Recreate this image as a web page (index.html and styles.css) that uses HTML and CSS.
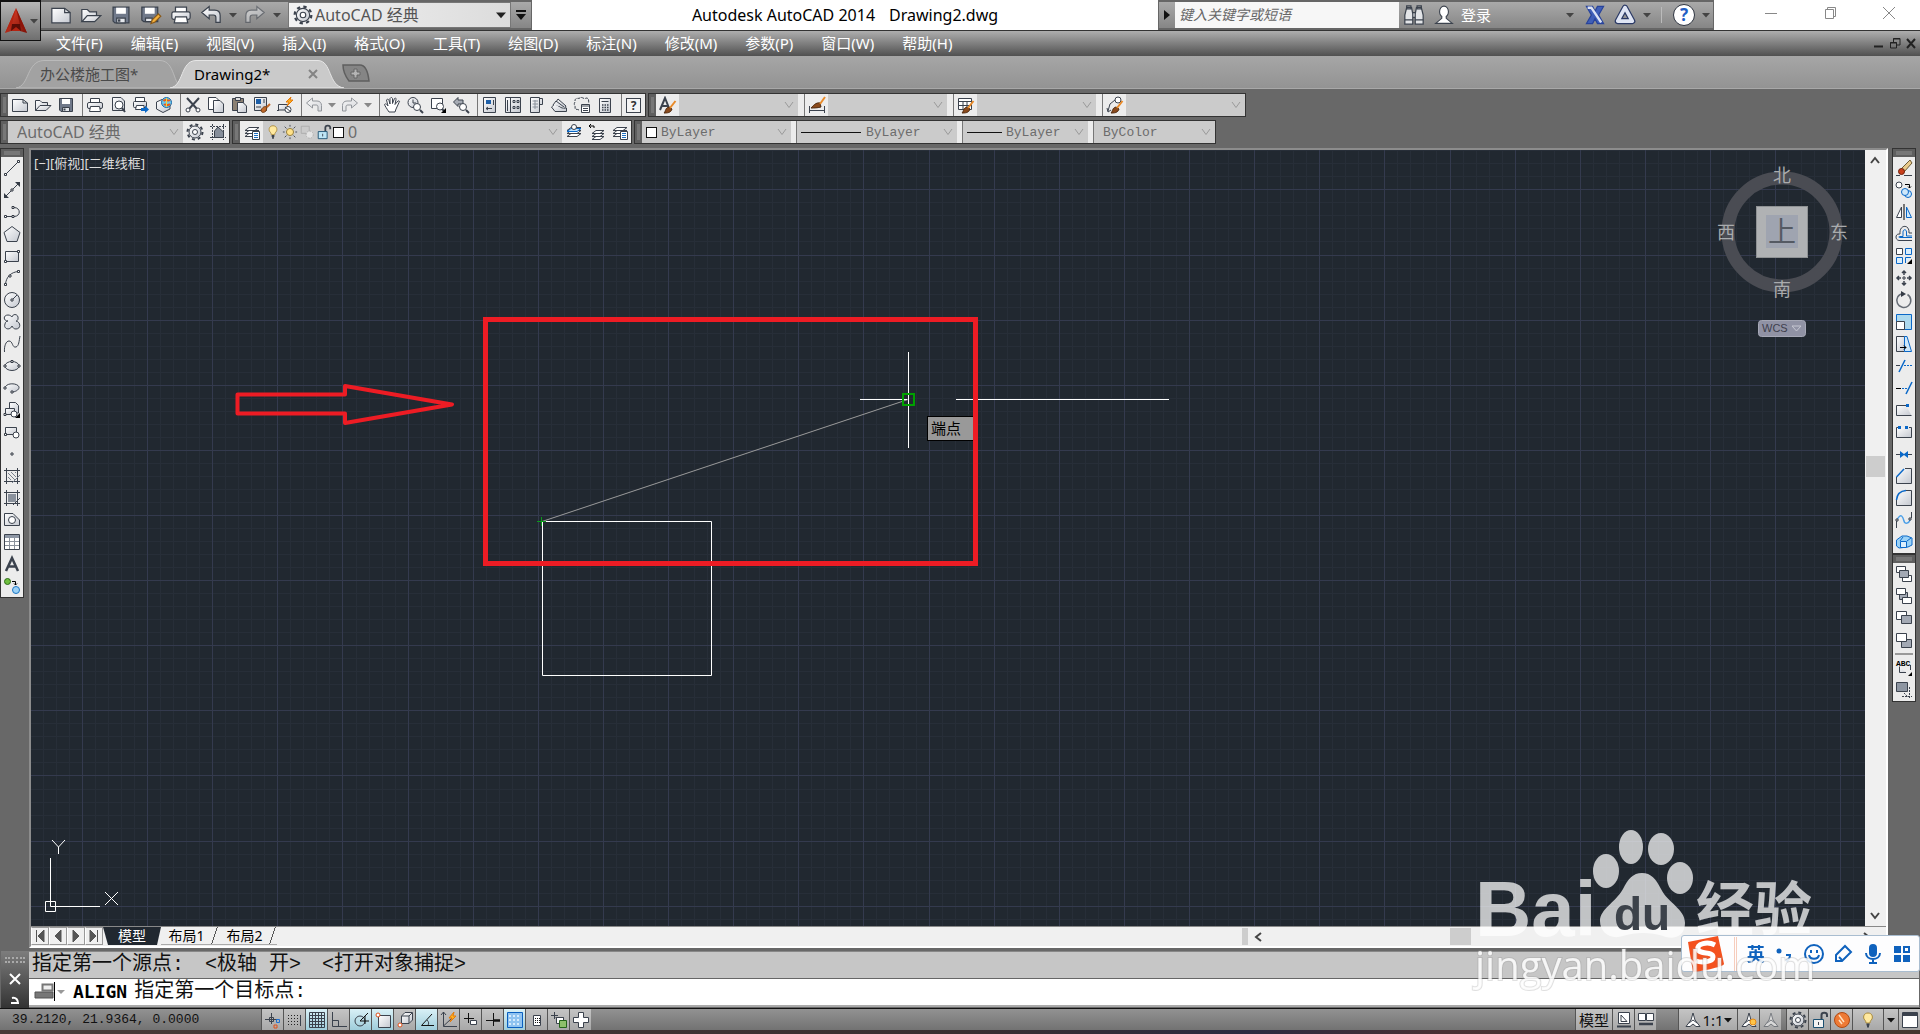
FILE: index.html
```html
<!DOCTYPE html>
<html lang="zh-CN">
<head>
<meta charset="utf-8">
<title>Autodesk AutoCAD 2014 Drawing2.dwg</title>
<link rel="stylesheet" href="styles.css">
</head>
<body>
<svg class="sprite" aria-hidden="true">
<defs>
<linearGradient id="g-face" x1="0" y1="0" x2="1" y2="1"><stop offset="0" stop-color="#fff"/><stop offset="1" stop-color="#c4c8d0"/></linearGradient>
<linearGradient id="g-red" x1="0" y1="0" x2="1" y2="1"><stop offset="0" stop-color="#e8452c"/><stop offset="1" stop-color="#7d1208"/></linearGradient>
</defs>
<symbol id="new" viewBox="0 0 18 18"><path class="face" d="M1.500 3.500H12L16.500 7V15.500H1.500Z"/><path d="M12 3.500V7H16.500"/></symbol>
<symbol id="open" viewBox="0 0 18 18"><path class="face" d="M1.500 14.500V4.500H6L8 6.500H13.500V9"/><path class="face" d="M1.500 14.500L6 9.500H17L12 14.500Z"/></symbol>
<symbol id="save" viewBox="0 0 18 18"><path d="M2.500 2.500H15.500V15.500H4L2.500 14Z" fill="#70798a"/><path d="M5 3H13V8H5Z" fill="#fff" stroke="none"/><path d="M5.500 11.500H12.500V15.500H5.500Z" fill="#e4e7ec"/><path d="M7.500 12.500V14.500" stroke-width="2"/></symbol>
<symbol id="saveas" viewBox="0 0 18 18"><path d="M1.500 2.500H14.500V14.500H3L1.500 13Z" fill="#70798a"/><path d="M4 3H12V8H4Z" fill="#fff" stroke="none"/><path d="M4.500 11.500H10V14.500H4.500Z" fill="#e4e7ec"/><path d="M9 16L10 13L15 8L17 10L12 15Z" fill="#f3b03c" stroke="#8a5a1a"/></symbol>
<symbol id="print" viewBox="0 0 18 18"><path class="white" d="M4.500 2.500H13.500V7H4.500Z"/><rect class="face" x="1.500" y="6.500" width="15" height="6" rx="1.500"/><path class="white" d="M4.500 10.500H13.500L14.500 15.500H3.500Z"/></symbol>
<symbol id="preview" viewBox="0 0 18 18"><path class="face" d="M3.500 1.500H12L15.500 5V14.500H3.500Z"/><circle class="white" cx="10" cy="9" r="4"/><path d="M13 12L16 16" stroke-width="2"/></symbol>
<symbol id="publish" viewBox="0 0 18 18"><path class="white" d="M3.500 1.500H12.500V6H3.500Z"/><rect class="face" x="1.500" y="5.500" width="13" height="6" rx="1"/><path class="white" d="M4.500 9.500H12V13.500H3.500Z"/><path class="blue-fill" d="M9 12H13V9.500L17 13.500L13 17V15H9Z"/></symbol>
<symbol id="globe3d" viewBox="0 0 18 18"><path class="face" d="M1.500 6L7 3.500L15 6V13L8 16.500L1.500 13Z"/><circle cx="11.500" cy="6.500" r="5" fill="#6ec6ea" stroke="#1b6aa8"/><path d="M8.500 5C11 2 12 6 15 4M9 9C11 7 12 11 15 8" stroke="#e85a1a" stroke-width="2"/><path d="M11.500 2V11" stroke="#f5d33a"/></symbol>
<symbol id="cut" viewBox="0 0 18 18"><path d="M3 2L13 13M15 2L5 13" stroke-width="2"/><circle class="white" cx="4" cy="14" r="2"/><circle class="white" cx="14" cy="14" r="2"/></symbol>
<symbol id="copy" viewBox="0 0 18 18"><path class="white" d="M1.500 1.500H9L11.500 4V13.500H1.500Z"/><path class="face" d="M6.500 4.500H13L16.500 8V16.500H6.500Z"/></symbol>
<symbol id="paste" viewBox="0 0 18 18"><path d="M2.500 2.500H13.500V14.500H2.500Z" fill="#8b8072"/><path d="M5.500 1.500H10.500V4.500H5.500Z" fill="#ddd"/><path class="face" d="M7.500 6.500H13L16.500 10V16.500H7.500Z"/></symbol>
<symbol id="match" viewBox="0 0 18 18"><path class="face" d="M1.500 1.500H13.500V14.500H1.500Z"/><path d="M3 3H8V8H3Z" fill="#1d5fa8" stroke="none"/><path d="M10 4H12M10 6H12M3 11H8"/><path d="M8 14C10 11 11 10 14 11L13 15C11 17 8 17 8 14Z" fill="#c1692a" stroke="#6b3a12"/><path d="M14 11L17 8" stroke="#c1692a" stroke-width="2"/></symbol>
<symbol id="block" viewBox="0 0 18 18"><path class="face" d="M2.500 8.500H11.500V14H2.500Z"/><circle cx="12" cy="13.500" r="3" class="white"/><path d="M1 14.500H3M9 11L15 16"/><path d="M15 1L10 6H13L11 10L17 4H14Z" fill="#ffb01f" stroke="#e37a0b"/></symbol>
<symbol id="undo" viewBox="0 0 18 18"><path class="face" d="M1.500 7L7.500 2V5H12C15 5 16.500 7 16.500 9.500V15H13V11C13 9.500 12.500 9 11 9H7.500V12Z"/></symbol>
<symbol id="redo" viewBox="0 0 18 18"><path class="face" d="M16.500 7L10.500 2V5H6C3 5 1.500 7 1.500 9.500V15H5V11C5 9.500 5.500 9 7 9H10.500V12Z"/></symbol>
<symbol id="pan" viewBox="0 0 18 18"><path class="white" d="M6 16C4 13 2 10 1.500 8.500C2.500 7 4 8.500 5 10L3.500 4C4.500 2.500 5.500 3 6 4.500L7 8L7 2.500C8 1 9 1.500 9.500 2.500V7.500L11.500 2.500C12.500 1.500 13.500 2.500 13 3.500L12 8.500L15 5C16.500 4.500 17 5.500 16 6.500L13 13L12 16Z"/></symbol>
<symbol id="zoomrt" viewBox="0 0 18 18"><circle class="face" cx="7" cy="6.500" r="5"/><path d="M7 3.500V7H10"/><circle class="white" cx="11" cy="11" r="3.500"/><path d="M14 14L17 17" stroke-width="2"/></symbol>
<symbol id="zoomwin" viewBox="0 0 18 18"><path class="white" d="M2.500 2.500H13.500V12.500H2.500Z"/><circle class="white" cx="11" cy="10.500" r="3.500"/><path d="M13 13L15 15" stroke-width="2"/><path d="M17 12V17H12Z" fill="#000" stroke="none"/></symbol>
<symbol id="zoomprev" viewBox="0 0 18 18"><path d="M1.500 6L6 1.500V4H11V8H6V10.500Z" fill="#a6abb4"/><circle class="white" cx="11" cy="11" r="3.500"/><path d="M14 14L17 17" stroke-width="2"/></symbol>
<symbol id="props" viewBox="0 0 18 18"><path class="face" d="M2.500 1.500H14.500V16.500H2.500Z"/><path d="M5 4H10V8H5Z" fill="#1d5fa8" stroke="none"/><path d="M12.500 4V9M5 12.500H11M7 11L5 12.500L7 14"/></symbol>
<symbol id="dcenter" viewBox="0 0 18 18"><path class="face" d="M1.500 1.500H16.500V16.500H1.500Z"/><path d="M3.500 4V15M6.500 2V16M9 4.500H11V6.500H9ZM13 4.500H15V6.500H13ZM9 10.500H11V12.500H9ZM13 10.500H15V12.500H13Z"/></symbol>
<symbol id="palette" viewBox="0 0 18 18"><path class="face" d="M3.500 1.500H12.500V16.500H3.500ZM12.500 2.500H15.500V8.500H12.500"/><path d="M5.500 5H11M5.500 8H11M5.500 11H11M8 4V13" stroke="#8a919c"/></symbol>
<symbol id="sheets" viewBox="0 0 18 18"><path class="face" d="M1.500 11L5 8L12 12H16.500V15.500H5Z"/><path class="face" d="M3 9L6 5L14 11M6 6L8 3L16 10L14.500 12.500"/></symbol>
<symbol id="markup" viewBox="0 0 18 18"><path d="M2 5C2 1 6 3 7 2C9 0 11 4 13 2C17 2 15 6 16 7M2 6C0 9 3 10 2 12C2 14 5 13 6 14" stroke-dasharray="3 1"/><path class="white" d="M8.500 8.500H16.500V16.500H8.500Z"/><path d="M8.500 10H16.500M10 12.500H15M10 14.500H15"/></symbol>
<symbol id="calc" viewBox="0 0 18 18"><path class="face" d="M3.500 2.500H14.500V16.500H3.500Z"/><path d="M5.500 5.500H12.500"/><path d="M6 9H12.500M6 11.500H12.500M6 14H12.500" stroke-dasharray="1.500 1" stroke-width="1.500"/></symbol>
<symbol id="layers" viewBox="0 0 18 18"><path class="white" d="M2 13.500L6 10.500H16L12 13.500ZM2 10.500L6 7.500H16L12 10.500ZM2 7.500L6 4.500H16L12 7.500Z"/></symbol>
<symbol id="layerp" viewBox="0 0 18 18"><use href="#layers"/><path class="white" d="M9.500 8.500H16.500V16.500H9.500Z"/><path d="M11 10.500H15M11 12.500H15M11 14.500H15" stroke="#1d6fc0"/></symbol>
<symbol id="layercur" viewBox="0 0 18 18"><use href="#layers"/><path d="M2 8.500L6 5.500H16L12 8.500Z" fill="#bfe0fa" stroke="#0a68c8"/><circle class="white" cx="9" cy="4" r="2.500"/></symbol>
<symbol id="layerprev" viewBox="0 0 18 18"><path class="white" d="M4 16.500L8 13.500H16L12 16.500ZM4 13.500L8 10.500H16L12 13.500ZM4 10.500L8 7.500H16L12 10.500Z"/><path d="M6 5V3H1M3 1L1 3L3 5" stroke="#000"/></symbol>
<symbol id="gear" viewBox="0 0 18 18"><circle cx="9" cy="9" r="7.500" stroke-width="2" stroke-dasharray="3 2.900"/><circle class="face" cx="9" cy="9" r="6"/><circle class="white" cx="9" cy="9" r="2.500"/></symbol>
<symbol id="wsset" viewBox="0 0 18 18"><path d="M1 3.500H17M1 14.500H17M3.500 1V17M14.500 1V17" stroke-dasharray="2 1"/><path d="M5.500 14.500V8L9 4L14.500 9V14.500Z" fill="#868e9a"/></symbol>
<symbol id="bulb" viewBox="0 0 18 18"><path d="M9 2C5 2 4 5.500 5 8C6 9.500 7 10 7 12H11C11 10 12 9.500 13 8C14 5.500 13 2 9 2Z" fill="#ffe9a0" stroke="#a98a3c"/><path d="M7.500 13.500H10.500M8 15.500H10" stroke-width="2"/></symbol>
<symbol id="sun" viewBox="0 0 18 18"><circle cx="9" cy="9" r="4" fill="#ffe28a" stroke="#8c7430"/><path d="M9 1V3M9 15V17M1 9H3M15 9H17M3 3L5 5M13 13L15 15M15 3L13 5M5 13L3 15"/></symbol>
<symbol id="vpfreeze" viewBox="0 0 18 18"><path d="M2.500 2.500H11.500V10.500H2.500Z" stroke="#aaa"/><circle cx="12" cy="12" r="4" fill="#e4e4e4" stroke="#aaa" stroke-dasharray="2 1"/></symbol>
<symbol id="unlock" viewBox="0 0 18 18"><path d="M10.500 8V4C10.500 1 16 1 16 4V6" stroke-width="2"/><path class="lockbody" d="M2.500 8.500H12.500V16.500H2.500Z"/><path d="M7.500 11V14"/></symbol>
<symbol id="brush" viewBox="0 0 18 18"><path d="M5 17C7 15 6 12 10 11L13 13C12 17 8 17 5 17Z" fill="#8a4a1c" stroke="#4e2a10"/><path d="M11 12L16.500 5" stroke="#e98a28" stroke-width="2"/></symbol>
<symbol id="textstyle" viewBox="0 0 18 18"><path d="M1 14L6 2L10 12M3 10H9" stroke-width="2"/><use href="#brush"/></symbol>
<symbol id="dimstyle" viewBox="0 0 18 18"><path d="M1.500 10V17M16.500 10V17M2 14.500H16"/><path d="M3 12C5 10 8 6 12 7L13 11C9 12 6 12 3 12Z" fill="#8a4a1c" stroke="#4e2a10"/><path d="M12 8L17 1" stroke="#e98a28" stroke-width="2"/></symbol>
<symbol id="tblstyle" viewBox="0 0 18 18"><path class="white" d="M1.500 2.500H14.500V13.500H1.500Z"/><path d="M1.500 5.500H14.500M1.500 9.500H14.500M6 5V13M10 5V13"/><use href="#brush"/></symbol>
<symbol id="mldstyle" viewBox="0 0 18 18"><circle class="white" cx="12" cy="4" r="3"/><path d="M2 15L4 8L9 4M1 12L2 16L5 14"/><use href="#brush"/></symbol>
<symbol id="line" viewBox="0 0 18 18"><path d="M3 15L15 3"/><path class="node" d="M1.500 14.500h2v2h-2zM14.500 1.500h2v2h-2z"/></symbol>
<symbol id="xline" viewBox="0 0 18 18"><path d="M2 16L16 2"/><path d="M1 17V12L6 17ZM17 1V6L12 1Z" fill="#343b45" stroke="none"/><path class="node" d="M8 8h2v2h-2z"/></symbol>
<symbol id="pline" viewBox="0 0 18 18"><path d="M3 13.500H11C18 13.500 18 4.500 11 4.500H10"/><path class="node" d="M1.500 12.500h2v2h-2zM9 12.500h2v2h-2zM9 3.500h2v2h-2z"/></symbol>
<symbol id="polygon" viewBox="0 0 18 18"><path class="face" d="M9 1.500L17 7.500L14 16.500H4L1 7.500Z"/></symbol>
<symbol id="rect" viewBox="0 0 18 18"><path class="face" d="M2.500 4.500H15.500V14.500H2.500Z"/><path class="node" d="M1.500 13.500h2v2h-2zM14.500 3.500h2v2h-2z"/></symbol>
<symbol id="arc" viewBox="0 0 18 18"><path d="M2.500 15.500C3 8 8 3 15.500 2.500"/><path class="node" d="M1.500 14.500h2v2h-2zM14.500 1.500h2v2h-2zM6 6h2v2h-2z"/></symbol>
<symbol id="circle" viewBox="0 0 18 18"><circle class="face" cx="9" cy="9" r="7.500"/><path d="M9 9L14 4"/><path class="node" d="M8 8h2v2h-2z"/></symbol>
<symbol id="revcloud" viewBox="0 0 18 18"><path class="face" d="M5 8C0 8 0 2 5 2C7 2 8 3 9 4C10 0 16 1 15 6C15 7 14 8 13 8C18 9 18 16 13 16C11 16 10 15 9 13C7 18 0 16 2 11C2 9 4 8 5 8Z"/></symbol>
<symbol id="spline" viewBox="0 0 18 18"><path d="M1.500 17C1 11 3 6 6 6C10 6 9 13 13 12C16 11 16 6 17 1"/></symbol>
<symbol id="ellipse" viewBox="0 0 18 18"><ellipse class="face" cx="9" cy="9" rx="7" ry="4.500"/><path class="node" d="M1 8h2v2h-2zM15 8h2v2h-2zM8 3.500h2v2h-2z"/></symbol>
<symbol id="ellarc" viewBox="0 0 18 18"><path class="face" d="M2 9C3 3 16 4 16 8.500C16 11 12 13 9 13"/><path class="node" d="M1 8h2v2h-2zM8 12h2v2h-2z"/></symbol>
<symbol id="insert" viewBox="0 0 18 18"><path class="face" d="M6.500 1.500H12.500L15.500 4.500V12H6.500Z"/><path class="face" d="M2.500 7.500H11.500V13.500H2.500Z"/><circle class="white" cx="11" cy="13" r="3"/><path d="M17 12V17H12Z" fill="#000" stroke="none"/><path class="node" d="M1 12.500h2v2h-2z"/></symbol>
<symbol id="mkblock" viewBox="0 0 18 18"><path class="face" d="M2.500 4.500H13.500V11.500H2.500Z"/><circle class="white" cx="13" cy="12" r="3"/><path class="node" d="M1.500 10.500h2v2h-2z"/></symbol>
<symbol id="point" viewBox="0 0 18 18"><path class="node" d="M8 8h2v2h-2z"/></symbol>
<symbol id="hatch" viewBox="0 0 18 18"><path d="M1 3.500H17M1 14.500H17M3.500 1V17M14.500 1V17"/><path d="M5 10L8 13M5 6L12 13M8 5L13 10M12 5L13 6M9 16L17 8" stroke="#7a828e"/></symbol>
<symbol id="gradient" viewBox="0 0 18 18"><path d="M5 5H13V13H5Z" fill="#8a919c" stroke="none"/><path d="M1 3.500H17M1 14.500H17M3.500 1V17M14.500 1V17M10 16L17 9"/></symbol>
<symbol id="region" viewBox="0 0 18 18"><path class="face" d="M1.500 2.500H10L16.500 9V14.500H1.500Z"/><circle class="white" cx="9" cy="9" r="3.500"/></symbol>
<symbol id="table" viewBox="0 0 18 18"><path class="white" d="M1.500 1.500H16.500V16.500H1.500Z"/><path d="M2 2H16V5H2Z" fill="#8e97a5" stroke="none"/><path d="M2 8.500H16M2 12.500H16M6.500 5V16M11.500 5V16" stroke="#8b929c"/></symbol>
<symbol id="mtext" viewBox="0 0 18 18"><path d="M3 16L9 3L15 16M5 11.500H13" stroke-width="2.500"/></symbol>
<symbol id="addsel" viewBox="0 0 18 18"><circle cx="4.500" cy="4.500" r="3" fill="#6fbf3f" stroke="#2d6b17"/><circle cx="13" cy="13" r="3.500" fill="#9bd2f7" stroke="#1b76c4"/><path d="M9 4.500H12.500V8M11 6.500L12.500 8L14 6.500" stroke="#000"/></symbol>
<symbol id="erase" viewBox="0 0 18 18"><path d="M6 10L15 1L17 4L9 13Z" fill="#e8c98b" stroke="#6c5a34"/><circle cx="6.500" cy="12.500" r="3" fill="#c93f1a" stroke="#6b1f0b"/><path d="M1 16.500H5M9 16.500H17"/></symbol>
<symbol id="copyobj" viewBox="0 0 18 18"><circle class="white" cx="4" cy="4" r="3"/><path d="M10 3.500H14.500V7M13 5.500L14.500 7L16 5.500" stroke="#000"/><circle cx="13" cy="13" r="3.500" fill="#cfe8fa" stroke="#0a68c8"/><circle cx="10" cy="11" r="3.500" fill="#cfe8fa" stroke="#0a68c8"/></symbol>
<symbol id="mirror" viewBox="0 0 18 18"><path class="white" d="M6.500 4V14.500H1.500Z"/><path d="M11.500 4V14.500H16.500Z" fill="#cfe8fa" stroke="#0a68c8"/><path d="M9 1V17" stroke="#000"/></symbol>
<symbol id="offset" viewBox="0 0 18 18"><path d="M17 15.500H4C0 15 0 9 4 9H5C4 -1 15 -1 14 8H17"/><path d="M17 12.500H4.500C3.500 12.500 3.500 11.500 4.500 11.500H8V7C8 4 11.500 4 11.500 7V11H17" stroke="#0a68c8"/></symbol>
<symbol id="array" viewBox="0 0 18 18"><path class="white" d="M1.500 1.500H7.500V7.500H1.500Z"/><path d="M10.500 1.500H16.500V7.500H10.500ZM1.500 10.500H7.500V16.500H1.500ZM10.500 16V10.500H16" fill="#dceffc" stroke="#0a68c8"/><path d="M17 12V17H12Z" fill="#000" stroke="none"/></symbol>
<symbol id="move" viewBox="0 0 18 18"><path d="M9 2V6M9 12V16M2 9H6M12 9H16M7 4L9 2L11 4M7 14L9 16L11 14M4 7L2 9L4 11M14 7L16 9L14 11" stroke-width="1.500"/><path class="node" d="M8 8h2v2h-2z"/></symbol>
<symbol id="rotate" viewBox="0 0 18 18"><path d="M12.500 3.500A7 7 0 1 1 8 2.500" stroke-width="1.500" stroke="#666c75"/><path d="M6 0L11 3L6 6Z" fill="#343b45" stroke="none"/></symbol>
<symbol id="scale" viewBox="0 0 18 18"><path d="M1.500 1.500H16.500V16.500H1.500Z" fill="#add9ee" stroke="#0a68c8"/><path class="white" d="M1.500 8.500H9.500V16.500H1.500Z"/></symbol>
<symbol id="stretch" viewBox="0 0 18 18"><path class="face" d="M1.500 1.500H9.500V16.500H1.500Z"/><path d="M9.500 1.500H12L16.500 16.500H9.500Z" fill="#cfe8fa" stroke="#0a68c8"/><path d="M5 12.500H11M9 10.500L11 12.500L9 14.500" stroke="#000"/></symbol>
<symbol id="trim" viewBox="0 0 18 18"><path d="M1 8.500H5"/><path d="M9 8.500H17" stroke="#0a68c8" stroke-dasharray="2 1"/><path d="M4 15L10 3" stroke="#0a68c8" stroke-width="1.500"/></symbol>
<symbol id="extend" viewBox="0 0 18 18"><path d="M1 9.500H6" stroke="#000"/><path d="M7 9.500H12" stroke="#0a68c8" stroke-dasharray="2 1"/><path d="M11 15L17 3" stroke="#0a68c8" stroke-width="1.500"/></symbol>
<symbol id="breakpt" viewBox="0 0 18 18"><path class="face" d="M11 4.500H1.500V14.500H16.500"/><path class="blue-fill" d="M11 3H14V6H11Z"/></symbol>
<symbol id="break" viewBox="0 0 18 18"><path class="face" d="M4 4.500H1.500V14.500H16.500V4.500H14"/><path class="blue-fill" d="M3 3H6V6H3ZM10 3H13V6H10Z"/></symbol>
<symbol id="join" viewBox="0 0 18 18"><path d="M1 9.500H6M12 9.500H17"/><path class="blue-fill" d="M5 6L9 9L13 6V13L9 10L5 13Z"/></symbol>
<symbol id="chamfer" viewBox="0 0 18 18"><path class="face" d="M10 1.500H16.500V16.500H1.500V10"/><path d="M1.500 10L9 2" stroke="#0a68c8" stroke-width="1.500"/></symbol>
<symbol id="fillet" viewBox="0 0 18 18"><path class="face" d="M11 1.500H16.500V16.500H1.500V11"/><path d="M1.500 11C2 5 5 2 11 1.500" stroke="#0a68c8" stroke-width="1.500"/></symbol>
<symbol id="blend" viewBox="0 0 18 18"><path d="M1.500 10V17M16.500 1V7"/><path d="M2 9C6 1 8 6 9 10C10 14 14 12 15 9" stroke="#4a9fe8" stroke-width="1.500"/><path class="node" d="M1 8h2v2h-2zM14 7h2v2h-2z"/></symbol>
<symbol id="explode" viewBox="0 0 18 18"><path d="M1.500 7L7 3H12L17 5V12L13 14L4 15L1.500 13Z" fill="#9bd2f7" stroke="#0a68c8"/><path d="M5.500 8.500H11.500V14.500H5.500ZM5 8L8 4M12 8L16 5" fill="#dceffc" stroke="#0a68c8"/></symbol>
<symbol id="front" viewBox="0 0 18 18"><path class="white" d="M1.500 1.500H10.500V7.500H1.500ZM7.500 10.500H16.500V16.500H7.500Z"/><path d="M4.500 5.500H13.500V12.500H4.500Z" fill="#a3a9b4"/></symbol>
<symbol id="back" viewBox="0 0 18 18"><path d="M4.500 5.500H12.500V12.500H4.500Z" fill="#a3a9b4"/><path class="white" d="M1.500 1.500H10.500V7.500H1.500ZM7.500 10.500H16.500V16.500H7.500Z"/></symbol>
<symbol id="above" viewBox="0 0 18 18"><path class="white" d="M1.500 2.500H11.500V10.500H1.500Z"/><path d="M6.500 6.500H16.500V14.500H6.500Z" fill="#a3a9b4"/></symbol>
<symbol id="under" viewBox="0 0 18 18"><path d="M6.500 8.500H16.500V16.500H6.500Z" fill="#a3a9b4"/><path class="white" d="M1.500 2.500H11.500V10.500H1.500Z"/></symbol>
<symbol id="hatchback" viewBox="0 0 18 18"><path d="M7 15.500H17M14.500 6V17M9 12L13 16" stroke-dasharray="2 1"/><path d="M1.500 1.500H12.500V10.500H1.500Z" fill="#8e96a2"/></symbol>
<symbol id="people" viewBox="0 0 18 18"><ellipse class="white" cx="9" cy="6" rx="4" ry="5"/><path class="white" d="M7 10V12L1.500 16.500H16.500L11 12V10"/></symbol>
<symbol id="binoc" viewBox="0 0 18 18"><path d="M3 3H7L8 8V16.500H1.500V9ZM11 3H15L16.500 9V16.500H10V8ZM8 7H10V11H8Z" fill="#e3e5e8"/><path d="M3 1.500H6.500V4H3ZM11.500 1.500H15V4H11.500ZM1.500 13H8M10 13H16.500"/></symbol>
<symbol id="exchange" viewBox="0 0 18 18"><path d="M2 2H7L9 6L11 2H16L12 9L16 16H11L9 12L7 16H2L6 9Z" fill="#3f5fb8" stroke="#28439b"/><path d="M3 3H6L14 15" stroke="#dce3f5" stroke-width="2"/></symbol>
<symbol id="a360" viewBox="0 0 18 18"><path d="M9 3L15 14H3Z" stroke="#2b3a66" stroke-width="5" stroke-linejoin="round"/><path d="M9 3L15 14H3Z" stroke="#dfe5f4" stroke-width="3" stroke-linejoin="round"/></symbol>
<symbol id="annot" viewBox="0 0 18 18"><path class="white" d="M9 2L11 9L16 15.500H12L9 13L6 15.500H2L7 9Z"/><path d="M5 12L9 9L13 12"/></symbol>
<symbol id="infer" viewBox="0 0 18 18"><path d="M7.500 2V13M1 8.500H14M5.500 6.500H9.500V10.500H5.500Z"/><path d="M12.500 8.500H15.500V11.500H12.500Z" stroke="#1f6fd0"/><path d="M10 14H13V17H10Z" stroke="#e0501a"/></symbol>
<symbol id="snap" viewBox="0 0 18 18"><path d="M2 4.500H12M2 7.500H12M2 10.500H12M2 13.500H12" stroke="#222" stroke-dasharray="1 2"/><path d="M14.500 4V15"/></symbol>
<symbol id="grid" viewBox="0 0 18 18"><path d="M1.500 1.500H16.500V16.500H1.500ZM4.500 1V17M7.500 1V17M10.500 1V17M13.500 1V17M1 4.500H17M1 7.500H17M1 10.500H17M1 13.500H17"/></symbol>
<symbol id="ortho" viewBox="0 0 18 18"><path d="M2.500 1V15.500H17M2.500 9.500H8.500V15.500"/></symbol>
<symbol id="polar" viewBox="0 0 18 18"><circle cx="8" cy="10" r="5"/><path d="M8 10L16 2M8 10H17M13 5V13" stroke="#111"/></symbol>
<symbol id="osnap" viewBox="0 0 18 18"><path class="face" d="M4.500 4.500H16.500V16.500H4.500Z"/><circle cx="4" cy="4" r="2" fill="#fff" stroke="#e0501a"/></symbol>
<symbol id="osnap3" viewBox="0 0 18 18"><path class="face" d="M5.500 5L9 1.500H16.500V9L13 12.500H5.500Z"/><path d="M13 12.500V5H6M13 5L16 2"/><circle cx="4" cy="14" r="2" fill="#fff" stroke="#e0501a"/></symbol>
<symbol id="otrack" viewBox="0 0 18 18"><path d="M14 3L3.500 14.500H16" stroke="#111"/><path d="M9 9C11 11 11 13 10 14"/></symbol>
<symbol id="ducs" viewBox="0 0 18 18"><path d="M3.500 1V15.500H17M1 4L3.500 1L6 4M3.500 15L12 7"/><path d="M14 1L9 7H12L10 11L16 5H13Z" fill="#ffb01f" stroke="#e37a0b"/></symbol>
<symbol id="dyn" viewBox="0 0 18 18"><path d="M6.500 2V12M2 7.500H12" stroke="#111"/><path class="white" d="M8.500 9.500H14.500V13.500H8.500Z"/></symbol>
<symbol id="lwt" viewBox="0 0 18 18"><path d="M9.500 2V15M2 9.500H9" stroke="#111"/><path d="M9 9.500H16" stroke="#111" stroke-width="2.500"/></symbol>
<symbol id="tpy" viewBox="0 0 18 18"><path d="M1.500 1.500H16.500V16.500H1.500Z" fill="#8fc3f0" stroke="#0a5fc0"/><path d="M3 5H15M3 9H15M3 13H15" stroke="#d7ecfd" stroke-width="2" stroke-dasharray="2 2"/></symbol>
<symbol id="qp" viewBox="0 0 18 18"><path class="white" d="M5.500 4.500H12.500V14.500H5.500Z"/><path d="M7 7.500H12M7 9.500H12M7 11.500H12" stroke="#111" stroke-dasharray="1 1"/></symbol>
<symbol id="selcyc" viewBox="0 0 18 18"><path d="M4.500 1V8M1 4.500H8M5.500 6.500H13.500V12"/><path class="white" d="M6.500 6.500H13.500V12.500H6.500Z"/><path d="M9.500 9.500H16.500V16.500H9.500Z" fill="#8dc06a" stroke="#25641a"/></symbol>
<symbol id="plus" viewBox="0 0 18 18"><path class="white" d="M6.500 1.500H11.500V6.500H16.500V11.500H11.500V16.500H6.500V11.500H1.500V6.500H6.500Z"/></symbol>
<symbol id="layoutq" viewBox="0 0 18 18"><path class="white" d="M3.500 1.500H14.500V12.500H3.500Z"/><path d="M6 4V10.500H12Z"/><path d="M2 15.500H16" stroke-width="2"/></symbol>
<symbol id="drawq" viewBox="0 0 18 18"><path class="white" d="M1.500 2.500H8.500V9.500H1.500ZM9.500 2.500H16.500V9.500H9.500Z"/><path d="M2 13H16" stroke-width="2.500"/></symbol>
<symbol id="perf" viewBox="0 0 18 18"><circle cx="9" cy="9" r="7.500" fill="#ee7a35" stroke="#b24a12"/><path d="M6 4L11 11M6 9L9 13" stroke="#ffe0c0" stroke-width="1.500"/></symbol>
<symbol id="clean" viewBox="0 0 18 18"><path class="white" d="M1.500 1.500H16.500V16.500H1.500Z"/><path d="M2 3.500H16" stroke-width="3"/></symbol>
<symbol id="tri" viewBox="0 0 8 8"><path d="M0 2H8L4 6.500Z" fill="currentColor" stroke="none"/></symbol>
<symbol id="chev" viewBox="0 0 10 10"><path d="M1 2L5 7.500L9 2" stroke="#9a9a9a"/></symbol>
</svg>

<header class="titlebar">
  <button class="appbtn" aria-label="应用程序菜单">
    <svg class="ic logo" viewBox="0 0 24 28"><path d="M12 1L23 26L16 24H7L1 26Z" fill="url(#g-red)" stroke="none"/><path d="M12 1L8 17L1 26ZM8 17L16 18L16 24H7Z" fill="#b32412" stroke="none"/><path d="M12 1L16 18L23 26Z" fill="#8c1408" stroke="none"/><path d="M8 17H16L17 24L12 20L7 24Z" fill="#5a0d06" stroke="none"/></svg>
    <svg class="ic t"><use href="#tri"/></svg>
  </button>
  <div class="qat">
    <button class="q" aria-label="新建"><svg class="ic"><use href="#new"/></svg></button>
    <button class="q" aria-label="打开"><svg class="ic"><use href="#open"/></svg></button>
    <button class="q" aria-label="保存"><svg class="ic"><use href="#save"/></svg></button>
    <button class="q" aria-label="另存为"><svg class="ic"><use href="#saveas"/></svg></button>
    <button class="q" aria-label="打印"><svg class="ic"><use href="#print"/></svg></button>
    <button class="q" aria-label="放弃"><svg class="ic"><use href="#undo"/></svg></button>
    <button class="drop" aria-label="放弃列表"><svg class="ic t"><use href="#tri"/></svg></button>
    <button class="q off" aria-label="重做"><svg class="ic"><use href="#redo"/></svg></button>
    <button class="drop" aria-label="重做列表"><svg class="ic t"><use href="#tri"/></svg></button>
    <label class="combo ws"><svg class="ic lead"><use href="#gear"/></svg><select class="ui" aria-label="工作空间"><option>AutoCAD 经典</option></select><svg class="ic t end"><use href="#tri"/></svg></label>
    <button class="drop more" aria-label="自定义"><svg class="ic" viewBox="0 0 10 10"><path d="M0 1H10" stroke="#111" stroke-width="2"/><path d="M0 4H10L5 10Z" fill="#111" stroke="none"/></svg></button>
  </div>
  <h1 class="doc"><span>Autodesk AutoCAD 2014</span><span>Drawing2.dwg</span></h1>
  <div class="info">
    <button class="drop flip" aria-label="展开"><svg class="ic" viewBox="0 0 8 10"><path d="M1 0L7 5L1 10Z" fill="#111" stroke="none"/></svg></button>
    <input type="text" placeholder="键入关键字或短语" aria-label="搜索">
    <button class="q" aria-label="查找"><svg class="ic"><use href="#binoc"/></svg></button>
    <button class="login"><svg class="ic"><use href="#people"/></svg><span>登录</span><svg class="ic t"><use href="#tri"/></svg></button>
    <button class="q" aria-label="Exchange"><svg class="ic"><use href="#exchange"/></svg></button>
    <button class="q" aria-label="保持连接"><svg class="ic"><use href="#a360"/></svg></button>
    <button class="drop" aria-label="连接选项"><svg class="ic t"><use href="#tri"/></svg></button>
    <i class="rule"></i>
    <button class="q" aria-label="帮助"><span class="qmark">?</span></button>
    <button class="drop" aria-label="帮助选项"><svg class="ic t"><use href="#tri"/></svg></button>
  </div>
  <div class="winbtns">
    <button aria-label="最小化"><svg class="ic" viewBox="0 0 14 14"><path d="M1 7.500H13"/></svg></button>
    <button aria-label="还原"><svg class="ic" viewBox="0 0 14 14"><path d="M2.500 3.500H10.500V12.500H2.500ZM4.500 3V1.500H12.500V10.500H11"/></svg></button>
    <button aria-label="关闭"><svg class="ic" viewBox="0 0 14 14"><path d="M1 1L13 13M13 1L1 13"/></svg></button>
  </div>
</header>

<nav class="menubar">
  <button>文件(F)</button><button>编辑(E)</button><button>视图(V)</button><button>插入(I)</button><button>格式(O)</button><button>工具(T)</button><button>绘图(D)</button><button>标注(N)</button><button>修改(M)</button><button>参数(P)</button><button>窗口(W)</button><button>帮助(H)</button>
  <div class="mdi">
    <button aria-label="最小化图形"><svg class="ic" viewBox="0 0 12 12"><path d="M1 9.500H10" stroke-width="2"/></svg></button>
    <button aria-label="还原图形"><svg class="ic" viewBox="0 0 12 12"><path d="M1.500 5.500H7.500V11H1.500ZM1 6H8M4.500 5V1.500H11V8H8M4 2H11"/></svg></button>
    <button aria-label="关闭图形"><svg class="ic" viewBox="0 0 12 12"><path d="M2 2L10 11M10 2L2 11" stroke-width="2"/></svg></button>
  </div>
</nav>

<div class="filetabs">
  <div class="ftab back"><svg class="shape" viewBox="0 0 168 28" preserveAspectRatio="none"><path d="M0 28C14 26 10 1 28 .5H144C160 1 156 26 168 28Z"/></svg><button>办公楼施工图*</button></div>
  <div class="ftab cur"><svg class="shape" viewBox="0 0 174 28" preserveAspectRatio="none"><path d="M0 28C14 26 10 1 26 .5H148C162 1 158 26 174 28Z"/></svg><button>Drawing2*</button><button class="x" aria-label="关闭"><svg class="ic" viewBox="0 0 10 10"><path d="M1 1L9 9M9 1L1 9" stroke="#848484" stroke-width="2"/></svg></button></div>
  <button class="addtab" aria-label="新图形"><svg class="ic" viewBox="0 0 28 18"><path d="M1 1H18C24 1 26 8 27 17H7C4 13 1 6 1 1Z" fill="#858585" stroke="#5f5f5f" stroke-width="1.500"/><path d="M12 5H15V8H18V11H15V14H12V11H9V8H12Z" fill="#b5b5b5" stroke="#666"/></svg></button>
</div>

<div class="bars">
  <div class="row">
    <div class="bar" role="toolbar" aria-label="标准">
      <i class="grip"></i>
      <button class="b" aria-label="新建"><svg class="ic"><use href="#new"/></svg></button><button class="b" aria-label="打开"><svg class="ic"><use href="#open"/></svg></button><button class="b" aria-label="保存"><svg class="ic"><use href="#save"/></svg></button>
      <i class="sep"></i>
      <button class="b" aria-label="打印"><svg class="ic"><use href="#print"/></svg></button><button class="b" aria-label="打印预览"><svg class="ic"><use href="#preview"/></svg></button><button class="b" aria-label="发布"><svg class="ic"><use href="#publish"/></svg></button><button class="b" aria-label="三维打印"><svg class="ic"><use href="#globe3d"/></svg></button>
      <i class="sep"></i>
      <button class="b" aria-label="剪切"><svg class="ic"><use href="#cut"/></svg></button><button class="b" aria-label="复制"><svg class="ic"><use href="#copy"/></svg></button><button class="b" aria-label="粘贴"><svg class="ic"><use href="#paste"/></svg></button><button class="b" aria-label="特性匹配"><svg class="ic"><use href="#match"/></svg></button><button class="b" aria-label="块编辑器"><svg class="ic"><use href="#block"/></svg></button>
      <i class="sep"></i>
      <button class="b off" aria-label="放弃"><svg class="ic"><use href="#undo"/></svg></button><button class="drop dim" aria-label="放弃列表"><svg class="ic t"><use href="#tri"/></svg></button><button class="b off" aria-label="重做"><svg class="ic"><use href="#redo"/></svg></button><button class="drop dim" aria-label="重做列表"><svg class="ic t"><use href="#tri"/></svg></button>
      <i class="sep"></i>
      <button class="b" aria-label="平移"><svg class="ic"><use href="#pan"/></svg></button><button class="b" aria-label="实时缩放"><svg class="ic"><use href="#zoomrt"/></svg></button><button class="b" aria-label="窗口缩放"><svg class="ic"><use href="#zoomwin"/></svg></button><button class="b" aria-label="缩放上一个"><svg class="ic"><use href="#zoomprev"/></svg></button>
      <i class="sep"></i>
      <button class="b" aria-label="特性"><svg class="ic"><use href="#props"/></svg></button><button class="b" aria-label="设计中心"><svg class="ic"><use href="#dcenter"/></svg></button><button class="b" aria-label="工具选项板"><svg class="ic"><use href="#palette"/></svg></button><button class="b" aria-label="图纸集"><svg class="ic"><use href="#sheets"/></svg></button><button class="b" aria-label="标记集"><svg class="ic"><use href="#markup"/></svg></button><button class="b" aria-label="计算器"><svg class="ic"><use href="#calc"/></svg></button>
      <i class="sep"></i>
      <button class="b" aria-label="帮助"><span class="qbox">?</span></button>
    </div>
    <div class="bar" role="toolbar" aria-label="样式">
      <i class="grip"></i>
      <button class="b" aria-label="文字样式"><svg class="ic"><use href="#textstyle"/></svg></button><label class="combo w-s"><select aria-label="文字样式列表"><option></option></select><svg class="ic end"><use href="#chev"/></svg></label>
      <i class="sep wide"></i>
      <button class="b" aria-label="标注样式"><svg class="ic"><use href="#dimstyle"/></svg></button><label class="combo w-s"><select aria-label="标注样式列表"><option></option></select><svg class="ic end"><use href="#chev"/></svg></label>
      <i class="sep wide"></i>
      <button class="b" aria-label="表格样式"><svg class="ic"><use href="#tblstyle"/></svg></button><label class="combo w-s"><select aria-label="表格样式列表"><option></option></select><svg class="ic end"><use href="#chev"/></svg></label>
      <i class="sep wide"></i>
      <button class="b" aria-label="多重引线样式"><svg class="ic"><use href="#mldstyle"/></svg></button><label class="combo w-s"><select aria-label="引线样式列表"><option></option></select><svg class="ic end"><use href="#chev"/></svg></label>
    </div>
  </div>
  <div class="row">
    <div class="bar" role="toolbar" aria-label="工作空间">
      <i class="grip"></i>
      <label class="combo w-ws"><select class="ui" aria-label="工作空间"><option>AutoCAD 经典</option></select><svg class="ic end"><use href="#chev"/></svg></label>
      <button class="b" aria-label="工作空间设置"><svg class="ic"><use href="#gear"/></svg></button><button class="b" aria-label="我的工作空间"><svg class="ic"><use href="#wsset"/></svg></button>
    </div>
    <div class="bar" role="toolbar" aria-label="图层">
      <i class="grip"></i>
      <button class="b" aria-label="图层特性"><svg class="ic"><use href="#layerp"/></svg></button>
      <label class="combo w-layer"><span class="lead states"><svg class="ic"><use href="#bulb"/></svg><svg class="ic"><use href="#sun"/></svg><svg class="ic"><use href="#vpfreeze"/></svg><svg class="ic"><use href="#unlock"/></svg><i class="swatch"></i></span><select class="ui" aria-label="图层列表"><option>0</option></select><svg class="ic end"><use href="#chev"/></svg></label>
      <button class="b" aria-label="置为当前"><svg class="ic"><use href="#layercur"/></svg></button><button class="b" aria-label="上一个图层"><svg class="ic"><use href="#layerprev"/></svg></button><button class="b" aria-label="图层状态"><svg class="ic"><use href="#layerp"/></svg></button>
    </div>
    <div class="bar" role="toolbar" aria-label="特性">
      <i class="grip"></i>
      <label class="combo w-color"><i class="swatch lead"></i><select aria-label="颜色"><option>ByLayer</option></select><svg class="ic end"><use href="#chev"/></svg></label>
      <i class="sep"></i>
      <label class="combo w-lt"><i class="stroke lead"></i><select aria-label="线型"><option>ByLayer</option></select><svg class="ic end"><use href="#chev"/></svg></label>
      <i class="sep"></i>
      <label class="combo w-lw"><i class="stroke lead"></i><select aria-label="线宽"><option>ByLayer</option></select><svg class="ic end"><use href="#chev"/></svg></label>
      <i class="sep"></i>
      <label class="combo w-plot"><select aria-label="打印样式"><option>ByColor</option></select><svg class="ic end"><use href="#chev"/></svg></label>
    </div>
  </div>
</div>

<main class="work">
  <div class="side">
    <div class="pal" role="toolbar" aria-label="绘图">
      <i class="grip"></i>
      <button aria-label="直线"><svg class="ic"><use href="#line"/></svg></button><button aria-label="构造线"><svg class="ic"><use href="#xline"/></svg></button><button aria-label="多段线"><svg class="ic"><use href="#pline"/></svg></button><button aria-label="多边形"><svg class="ic"><use href="#polygon"/></svg></button><button aria-label="矩形"><svg class="ic"><use href="#rect"/></svg></button><button aria-label="圆弧"><svg class="ic"><use href="#arc"/></svg></button><button aria-label="圆"><svg class="ic"><use href="#circle"/></svg></button><button aria-label="修订云线"><svg class="ic"><use href="#revcloud"/></svg></button><button aria-label="样条曲线"><svg class="ic"><use href="#spline"/></svg></button><button aria-label="椭圆"><svg class="ic"><use href="#ellipse"/></svg></button><button aria-label="椭圆弧"><svg class="ic"><use href="#ellarc"/></svg></button><button aria-label="插入块"><svg class="ic"><use href="#insert"/></svg></button><button aria-label="创建块"><svg class="ic"><use href="#mkblock"/></svg></button><button aria-label="点"><svg class="ic"><use href="#point"/></svg></button><button aria-label="图案填充"><svg class="ic"><use href="#hatch"/></svg></button><button aria-label="渐变色"><svg class="ic"><use href="#gradient"/></svg></button><button aria-label="面域"><svg class="ic"><use href="#region"/></svg></button><button aria-label="表格"><svg class="ic"><use href="#table"/></svg></button><button aria-label="多行文字"><svg class="ic"><use href="#mtext"/></svg></button><button aria-label="添加选定对象"><svg class="ic"><use href="#addsel"/></svg></button>
    </div>
  </div>
  <section class="frame">
    <div class="canvas">
      <svg class="model">
        <path id="grid-minor"/><path id="grid-major"/>
        <g transform="translate(-31 -150)">
          <path class="obj" d="M542.500 521.500H711.500V675.500H542.500ZM956 399.500H1169"/>
          <path class="band" d="M542 521.500L908 399.500"/>
          <path class="obj" d="M908.500 352V448M860 399.500H907"/>
          <path d="M903 394H914V405H903Z" stroke="#00a000" stroke-width="2"/>
          <path d="M537 521.500H546M541.500 517V526" stroke="#0a9a1a"/>
          <rect x="927.500" y="416.500" width="50" height="24" fill="#999" stroke="#000"/>
          <text class="tip" x="931" y="434">端点</text>
          <path class="note box" d="M485.500 319.500H975.500V563.500H485.500Z"/>
          <path class="note" d="M237.500 394.500H345V386L452 404.500L345 423V413.500H237.500Z"/>
        </g>
      </svg>
      <p class="viewlabel">[−][俯视][二维线框]</p>
      <svg class="cube" viewBox="0 0 140 190">
        <circle cx="67" cy="74" r="54" stroke="#4a4c53" stroke-width="13"/>
        <rect x="41.500" y="48.500" width="51" height="51" fill="#b0b2b4" stroke="#8f9294"/>
        <rect x="51" y="57" width="32" height="33" fill="#9fa4b0" stroke="none"/>
        <text class="top" x="67" y="84">上</text>
        <text x="67" y="24">北</text><text x="67" y="138">南</text><text x="11" y="81">西</text><text x="124" y="81">东</text>
        <rect x="43.500" y="162.500" width="47" height="16" rx="3" fill="#9092a4" stroke="#a6a8b6"/>
        <text class="wcs" x="47" y="174">WCS</text><path d="M77 168H86L81.500 173Z" stroke="#c6c7d2"/>
      </svg>
      <svg class="ucs" viewBox="0 0 80 80"><path d="M10.500 18V66.500H60M5.500 61.500H15.500V71.500H5.500ZM65 52L78 65M78 52L65 65M12 0L18.500 7L25 0M18.500 7V14"/></svg>
    </div>
    <div class="vscroll"><svg class="ic" viewBox="0 0 10 10"><path d="M1 8L5 3L9 8"/></svg><i></i><svg class="ic" viewBox="0 0 10 10"><path d="M1 2L5 7L9 2"/></svg></div>
    <div class="layoutbar">
      <button class="nv" aria-label="第一个"><svg class="ic" viewBox="0 0 12 12"><path d="M2.500 0V12"/><path d="M10 0V12L4 6Z"/></svg></button><button class="nv" aria-label="上一个"><svg class="ic" viewBox="0 0 12 12"><path d="M9 0V12L3 6Z"/></svg></button><button class="nv" aria-label="下一个"><svg class="ic" viewBox="0 0 12 12"><path d="M3 0V12L9 6Z"/></svg></button><button class="nv" aria-label="最后一个"><svg class="ic" viewBox="0 0 12 12"><path d="M9.500 0V12"/><path d="M2 0V12L8 6Z"/></svg></button>
      <button class="lt on">模型</button><button class="lt">布局1</button><button class="lt">布局2</button>
      <div class="hscroll"><i class="split"></i><svg class="ic" viewBox="0 0 10 10"><path d="M7 1L2 5L7 9"/></svg><i class="thumb"></i><svg class="ic" viewBox="0 0 10 10"><path d="M3 1L8 5L3 9"/></svg></div>
    </div>
  </section>
  <div class="side">
    <div class="pal" role="toolbar" aria-label="修改">
      <i class="grip"></i>
      <button aria-label="删除"><svg class="ic"><use href="#erase"/></svg></button><button aria-label="复制"><svg class="ic"><use href="#copyobj"/></svg></button><button aria-label="镜像"><svg class="ic"><use href="#mirror"/></svg></button><button aria-label="偏移"><svg class="ic"><use href="#offset"/></svg></button><button aria-label="阵列"><svg class="ic"><use href="#array"/></svg></button><button aria-label="移动"><svg class="ic"><use href="#move"/></svg></button><button aria-label="旋转"><svg class="ic"><use href="#rotate"/></svg></button><button aria-label="缩放"><svg class="ic"><use href="#scale"/></svg></button><button aria-label="拉伸"><svg class="ic"><use href="#stretch"/></svg></button><button aria-label="修剪"><svg class="ic"><use href="#trim"/></svg></button><button aria-label="延伸"><svg class="ic"><use href="#extend"/></svg></button><button aria-label="打断于点"><svg class="ic"><use href="#breakpt"/></svg></button><button aria-label="打断"><svg class="ic"><use href="#break"/></svg></button><button aria-label="合并"><svg class="ic"><use href="#join"/></svg></button><button aria-label="倒角"><svg class="ic"><use href="#chamfer"/></svg></button><button aria-label="圆角"><svg class="ic"><use href="#fillet"/></svg></button><button aria-label="光顺曲线"><svg class="ic"><use href="#blend"/></svg></button><button aria-label="分解"><svg class="ic"><use href="#explode"/></svg></button>
    </div>
    <div class="pal" role="toolbar" aria-label="绘图次序">
      <i class="grip"></i>
      <button aria-label="前置"><svg class="ic"><use href="#front"/></svg></button><button aria-label="后置"><svg class="ic"><use href="#back"/></svg></button><button aria-label="置于对象之上"><svg class="ic"><use href="#above"/></svg></button><button aria-label="置于对象之下"><svg class="ic"><use href="#under"/></svg></button>
      <i class="hsep"></i>
      <button aria-label="文字前置"><svg class="ic" viewBox="0 0 18 18"><path class="face" d="M4.500 7.500V13.500H11M15.500 6V11"/><path d="M17 13V17H13Z" fill="#000" stroke="none"/><text x="1" y="7" class="mini">ABC</text></svg></button><button aria-label="填充后置"><svg class="ic"><use href="#hatchback"/></svg></button>
    </div>
  </div>
</main>

<section class="cmd">
  <div class="cmdgrip"><i></i><button aria-label="关闭命令行"><svg class="ic" viewBox="0 0 12 12"><path d="M1 1L11 11M11 1L1 11"/></svg></button><button aria-label="自定义"><svg class="ic" viewBox="0 0 12 12"><path d="M3 3C7 2 9 5 9 8H2"/></svg></button></div>
  <div class="cmdtext">
    <p class="hist"><span>指定第一个源点:</span><span>&lt;极轴 开&gt;</span><span>&lt;打开对象捕捉&gt;</span></p>
    <label class="prompt"><svg class="ic" viewBox="0 0 32 20"><path d="M8.500 2.500H18.500V8.500H8.500Z" fill="#eee" stroke="#777" stroke-width="2"/><path d="M1 10H19V16H1Z" fill="#777" stroke="#555"/><path d="M20.500 0V19" stroke="#000"/><path d="M23 8H31L27 12Z" fill="#999" stroke="none"/></svg><b>ALIGN</b><span>指定第一个目标点:</span><input type="text" aria-label="命令"></label>
  </div>
</section>

<footer class="status">
  <output>39.2120, 21.9364, 0.0000</output>
  <div class="toggles">
    <button aria-label="推断约束"><svg class="ic"><use href="#infer"/></svg></button><button aria-label="捕捉"><svg class="ic"><use href="#snap"/></svg></button><button class="on" aria-label="栅格"><svg class="ic"><use href="#grid"/></svg></button><button aria-label="正交"><svg class="ic"><use href="#ortho"/></svg></button><button class="on" aria-label="极轴"><svg class="ic"><use href="#polar"/></svg></button><button class="on" aria-label="对象捕捉"><svg class="ic"><use href="#osnap"/></svg></button><button aria-label="三维对象捕捉"><svg class="ic"><use href="#osnap3"/></svg></button><button class="on" aria-label="对象追踪"><svg class="ic"><use href="#otrack"/></svg></button><button aria-label="动态 UCS"><svg class="ic"><use href="#ducs"/></svg></button><button aria-label="动态输入"><svg class="ic"><use href="#dyn"/></svg></button><button aria-label="线宽"><svg class="ic"><use href="#lwt"/></svg></button><button class="on" aria-label="透明度"><svg class="ic"><use href="#tpy"/></svg></button><button aria-label="快捷特性"><svg class="ic"><use href="#qp"/></svg></button><button aria-label="选择循环"><svg class="ic"><use href="#selcyc"/></svg></button><button aria-label="注释监视器"><svg class="ic"><use href="#plus"/></svg></button>
  </div>
  <div class="tray">
    <button class="space">模型</button><button aria-label="快速查看布局"><svg class="ic"><use href="#layoutq"/></svg></button><button aria-label="快速查看图形"><svg class="ic"><use href="#drawq"/></svg></button>
    <i class="gap"></i>
    <button class="scale"><svg class="ic"><use href="#annot"/></svg><span>1:1</span><svg class="ic t"><use href="#tri"/></svg></button><button aria-label="注释可见性"><svg class="ic"><use href="#annot"/><circle cx="13" cy="11" r="3" fill="#ffc54a" stroke="#e88a10"/></svg></button><button aria-label="自动缩放"><svg class="ic off"><use href="#annot"/></svg></button>
    <i class="nub"></i>
    <button aria-label="切换工作空间"><svg class="ic"><use href="#gear"/></svg></button><button class="grey" aria-label="锁定"><svg class="ic"><use href="#unlock"/></svg></button><button aria-label="硬件加速"><svg class="ic"><use href="#perf"/></svg></button><button class="bulb" aria-label="隔离对象"><svg class="ic"><use href="#bulb"/></svg></button><button class="drop" aria-label="状态栏菜单"><svg class="ic t"><use href="#tri"/></svg></button><button aria-label="全屏显示"><svg class="ic"><use href="#clean"/></svg></button>
  </div>
</footer>
<div class="desktop"></div>

<div class="ime">
  <svg class="s" viewBox="0 0 40 38"><path d="M3 7L33 1L39 29C39 32 12 37 8 37Z" fill="#f4511e"/><path d="M30 10C22 6 12 9 13 14C14 20 28 16 28 22C28 27 17 28 11 26" fill="none" stroke="#fff" stroke-width="5"/></svg>
  <i></i>
  <button>英</button>
  <button aria-label="标点"><svg viewBox="0 0 20 20"><circle cx="5" cy="7" r="2.500" fill="#0f62bd"/><path d="M12 11H16C16 14 15 16 12 17" fill="none" stroke="#0f62bd" stroke-width="2"/></svg></button>
  <button aria-label="表情"><svg viewBox="0 0 20 20" fill="none" stroke="#0f62bd" stroke-width="2"><circle cx="10" cy="10" r="9"/><path d="M5 11C6 16 14 16 15 11M7 6V9M13 6V9"/></svg></button>
  <button aria-label="手写"><svg viewBox="0 0 20 20" fill="none" stroke="#0f62bd" stroke-width="2"><path d="M3 11L12 2L18 8L9 17H3Z"/><path d="M6 13L9 16"/></svg></button>
  <button aria-label="语音"><svg viewBox="0 0 20 20" fill="none" stroke="#0f62bd" stroke-width="2"><rect x="7" y="1" width="6" height="11" rx="3" fill="#0f62bd"/><path d="M3 9C3 17 17 17 17 9M10 15V19M6 19H14"/></svg></button>
  <button aria-label="工具箱"><svg viewBox="0 0 20 20" fill="#0f62bd"><path d="M2 2H9V9H2ZM2 11H9V18H2ZM11 11H18V18H11Z"/><path d="M12 3H17V8H12Z" fill="none" stroke="#0f62bd" stroke-width="2"/></svg></button>
</div>
<svg class="mark" viewBox="0 0 350 170">
  <g fill="#fff" fill-opacity=".72">
    <text class="bai" x="0" y="107">Bai</text>
    <ellipse cx="131" cy="42" rx="13" ry="17"/><ellipse cx="156" cy="18" rx="12" ry="17"/><ellipse cx="186" cy="20" rx="13" ry="16"/><ellipse cx="205" cy="49" rx="13" ry="16"/>
    <path d="M167 44C176 44 181 50 186 60C193 74 210 80 210 94C210 108 198 111 188 107C176 103 160 103 148 107C136 111 125 104 125 92C125 80 140 74 148 60C153 50 158 44 167 44Z"/>
    <text class="jy" x="221" y="101">经验</text>
  </g>
  <text class="du" x="167" y="101">du</text>
  <text class="url" x="0" y="151">jingyan.baidu.com</text>
</svg>
<script src="grid.js"></script>
</body>
</html>
```

FILE: styles.css
```css
* { box-sizing: border-box; }
body { margin: 0; min-height: 100vh; display: flex; flex-direction: column; background: #686868; color: #111; font: 15px/20px "Noto Sans", "Noto Sans CJK SC", sans-serif; overflow: hidden; }
button { margin: 0; padding: 0; border: 0; background: none; color: inherit; font: inherit; display: flex; align-items: center; justify-content: center; }
h1, p { margin: 0; font-size: inherit; font-weight: 400; }
input, select { border: 0; margin: 0; font: inherit; color: inherit; appearance: none; border-radius: 0; min-width: 0; }
.sprite { position: absolute; width: 0; height: 0; }
.ic { width: 18px; height: 18px; flex: none; fill: none; stroke: #3b424d; }
.ic.t { width: 8px; height: 8px; color: #444; }
.face { fill: url(#g-face); }
.white { fill: #fff; }
.node { fill: #fff; stroke: #343b45; }
.blue-fill { fill: #0a68c8; stroke: none; }
.lockbody { fill: var(--lock, #bfe6f6); stroke: #1b4f70; }
.grey { --lock: #f2f2f2; }
.mini { font: bold 8px "Liberation Mono", monospace; fill: #000; stroke: none; }
.qmark, .qbox { display: block; text-align: center; font-weight: 700; }
.qmark { width: 22px; height: 22px; border-radius: 11px; border: 1px solid #2e3440; background: #fff; color: #1f5ec4; font-size: 17px; line-height: 20px; }
.qbox { width: 15px; height: 15px; border: 1px solid #3b424d; background: #f4f4f4; color: #333; font-size: 12px; line-height: 13px; }
.off { opacity: .5; }
.drop { width: 14px; }

/* title bar */
.titlebar { display: flex; height: 31px; background: #fff; border-bottom: 1px solid #333; position: relative; }
.appbtn { position: absolute; left: 0; top: 0; z-index: 2; width: 41px; height: 41px; border: 1px solid #111; border-top-width: 2px; background: linear-gradient(#b5b5b5, #6f6f6f); gap: 2px; }
.logo { width: 24px; height: 28px; }
.qat, .info { display: flex; background: linear-gradient(#a9a9a9, #868686); border: 1px solid #666; border-top-width: 2px; border-bottom-width: 2px; }
.qat { width: 532px; padding-left: 46px; border-left: 0; }
.q { width: 30px; }
.q .ic { width: 22px; height: 22px; }
.ws { flex: 1; margin-left: 4px; border: 1px solid #777; }
.ws .lead { width: 20px; height: 20px; margin-left: 4px; }
.ws .end { color: #222; width: 10px; height: 10px; }
.more { width: 20px; }
.more .ic, .flip .ic { width: 10px; height: 10px; }
.doc { flex: 1; display: flex; justify-content: center; align-items: center; gap: 14px; font-size: 16px; color: #000; }
.info { width: 556px; align-items: stretch; }
.info .flip { width: 16px; }
.info input { width: 224px; background: #f7f7f7; padding: 0 4px; font-size: 14px; }
.info input::placeholder { color: #666; font-style: italic; }
.login { flex: 1; color: #fff; gap: 6px; padding: 0 6px 0 4px; }
.login span { flex: 1; text-align: left; }
.login .ic:first-child { width: 22px; height: 20px; }
.rule { width: 1px; margin: 5px 7px; background: #bbb; }
.winbtns { display: flex; padding-left: 27px; padding-right: 2px; }
.winbtns button { width: 59px; padding-bottom: 4px; }
.winbtns .ic { width: 14px; height: 14px; stroke: #888; }

/* menu */
.menubar { display: flex; height: 25px; padding: 0 0 2px 56px; gap: 28px; color: #fff; background: linear-gradient(#aeaeae, #505050); }
.mdi { margin-left: auto; display: flex; gap: 4px; padding-right: 3px; }
.mdi .ic { width: 12px; height: 12px; stroke: #222; }

/* file tabs */
.filetabs { display: flex; height: 33px; padding: 4px 0 0 16px; background: linear-gradient(#a6a6a6, #939393); border-bottom: 1px solid #a8a8a8; }
.ftab { display: grid; height: 28px; width: 168px; align-items: center; }
.ftab > * { grid-area: 1 / 1; }
.ftab button { justify-self: start; margin-left: 24px; }
.ftab .x { justify-self: end; margin: 0 26px 0 0; }
.x .ic { width: 10px; height: 10px; }
.shape { width: 100%; height: 28px; fill: #a2a2a2; stroke: #bababa; }
.back { color: #4a4a4a; }
.cur { width: 174px; margin-left: -14px; color: #000; }
.cur .shape { fill: #cacaca; stroke: #e6e6e6; }
.addtab { height: 26px; margin-left: -2px; }
.addtab .ic { width: 28px; height: 18px; }

/* toolbars */
.bars { display: flex; flex-direction: column; gap: 3px; padding: 4px 0; }
.row { display: flex; gap: 2px; }
.bar { display: flex; height: 24px; border: 1px solid #333; background: #ececec; }
.grip { width: 7px; background: radial-gradient(#222 40%, #777 45%) 1px 1px / 2px 2px; border: 2px solid #5f5f5f; border-width: 3px 2px; flex: none; }
.b { width: 23px; }
.bar .drop { width: 13px; }
.dim .t { color: #888; }
.sep { width: 6px; border-right: 1px solid #777; border-left: 3px solid #ececec; }
.sep.wide { width: 7px; }
.combo { display: grid; align-items: stretch; }
.combo > * { grid-area: 1 / 1; align-self: center; z-index: 1; }
.combo > select { align-self: stretch; width: 100%; z-index: 0; background: #cbcbcb; color: #6c6c6c; font: 13px "Liberation Mono", monospace; padding: 0 20px 0 6px; }
.combo > .ui { font: 16px "Noto Sans", "Noto Sans CJK SC", sans-serif; }
.ws > .ui { background: linear-gradient(90deg, #f2f2f2, #dcdcdc); color: #555; padding-left: 26px; }
.combo .end { justify-self: end; margin-right: 4px; width: 10px; height: 10px; }
.lead { justify-self: start; margin-left: 4px; }
.swatch { width: 11px; height: 11px; border: 1px solid #111; background: #fff; }
.stroke { height: 1px; background: #111; }
.w-s { width: 119px; }
.w-ws { width: 175px; }
.w-ws > select { padding-left: 9px; }
.w-layer { width: 299px; }
.w-layer > select { padding-left: 85px; }
.states { display: flex; align-items: center; gap: 1px; margin-left: 2px; }
.states .ic { width: 16px; height: 16px; }
.w-color { width: 149px; }
.w-color > select { padding-left: 19px; }
.w-lt { width: 160px; }
.w-lt .stroke { width: 60px; }
.w-lt > select { padding-left: 69px; }
.w-lw { width: 125px; }
.w-lw .stroke { width: 35px; }
.w-lw > select { padding-left: 43px; }
.w-plot { width: 121px; }
.w-plot > select { padding-left: 9px; }

/* drawing area */
.work { flex: 1; display: flex; padding: 0 4px 0 0; min-height: 0; }
.side { width: 24px; display: flex; flex-direction: column; }
.pal { border: 1px solid #333; background: #ececec; display: flex; flex-direction: column; }
.pal .grip { width: auto; height: 8px; border-width: 2px 3px; }
.pal button { height: 22px; }
.hsep { height: 2px; margin: 2px; background: #999; }
.frame { flex: 1; min-width: 0; margin: 0 4px 0 5px; display: grid; grid-template: 1fr 20px / 1fr 21px; border: 2px solid #8c8c8c; border-right-color: #fff; border-bottom-color: #fff; }
.canvas { position: relative; overflow: hidden; background: #212830; }
.model { display: block; position: absolute; width: 100%; height: 100%; fill: none; }
#grid-minor { stroke: #272e38; }
#grid-major { stroke: #343a4e; }
.obj { stroke: #fff; }
.band { stroke: #9a9a9a; }
.note { stroke: #ed1c24; stroke-width: 4; stroke-linejoin: round; }
.note.box { stroke-width: 5; stroke-linejoin: miter; }
.tip { font: 15px "Noto Sans CJK SC", sans-serif; fill: #000; }
.viewlabel { position: absolute; left: 3px; top: 3px; color: #ddd; font-size: 13px; }
.cube { position: absolute; right: 10px; top: 8px; width: 140px; height: 190px; fill: none; }
.cube text { font: 18px "Noto Sans CJK SC", sans-serif; text-anchor: middle; fill: #a9abad; }
.cube .top { font-size: 28px; fill: #555a63; }
.cube .wcs { font: 11px "Liberation Sans", sans-serif; text-anchor: start; fill: #3e404c; }
.ucs { position: absolute; left: 9px; bottom: 6px; width: 80px; height: 80px; fill: none; stroke: #fff; }
.vscroll { display: grid; grid-template-rows: 20px 2fr 21px 3fr 20px; justify-items: center; align-items: center; background: #f0f0f0; padding-right: 1px; }
.vscroll i { grid-row: 3; width: 19px; height: 21px; background: #cdcdcd; }
.vscroll .ic, .hscroll .ic { width: 10px; height: 10px; stroke: #444; stroke-width: 2; }
.vscroll .ic:last-child { grid-row: 5; }
.layoutbar { background: #f0f0f0; display: flex; border-top: 1px solid #888; grid-column: 1 / 3; }
.nv { width: 18px; border: 1px solid #999; border-left-color: #fff; margin-bottom: 1px; }
.nv .ic { width: 12px; height: 12px; fill: #555; stroke: #555; stroke-width: 1; }
.lt { height: 18px; width: 58px; font-size: 14px; color: #000; background: linear-gradient(108deg, transparent 0 53px, #555 53px 54px, transparent 54px); border-bottom: 1px solid #aaa; padding-right: 7px; }
.lt.on { background: #212830; color: #fff; clip-path: polygon(0 0, 100% 0, 54px 100%, 5px 100%); border: 0; padding: 0; }
.hscroll { flex: 0 1 644px; margin-left: auto; display: grid; grid-template-columns: 6px 22px 180px 21px 1fr 40px; align-items: center; justify-items: center; }
.hscroll i { background: #cdcdcd; height: 17px; width: 100%; }
.hscroll .thumb { grid-column: 4; }
.hscroll .ic:last-child { grid-column: 6; }

/* command line */
.cmd { display: flex; height: 57px; margin: 3px 1px 0; }
.cmdgrip { width: 28px; display: flex; flex-direction: column; align-items: center; gap: 10px; background: linear-gradient(#7d7d7d, #333); padding-top: 6px; overflow: hidden; }
.cmdgrip i { width: 20px; height: 6px; border-top: 2px dotted #aaa; border-bottom: 2px dotted #aaa; }
.cmdgrip .ic { width: 12px; height: 12px; stroke: #fff; stroke-width: 2; }
.cmdtext { flex: 1; min-width: 0; font: 20px/26px "Liberation Mono", "Noto Sans CJK SC", monospace; color: #111; }
.hist { height: 28px; background: #c6c6c6; border-top: 1px solid #888; border-bottom: 1px solid #666; display: flex; gap: 21px; padding-left: 3px; }
.prompt { height: 28px; background: #fff; border-bottom: 2px solid #aaa; display: flex; align-items: center; gap: 7px; padding-left: 5px; }
.prompt .ic { width: 32px; height: 20px; }
.prompt b { font: bold 18px/24px "DejaVu Sans Mono", monospace; color: #000; }
.prompt input { flex: 1; background: none; outline: 0; }

/* status bar */
.status { display: flex; height: 22px; border-top: 1px solid #111; background: linear-gradient(#929292, #727272); }
.status output { width: 261px; padding-left: 12px; font: 13px/22px "Liberation Mono", monospace; }
.toggles, .tray { display: flex; }
.toggles button, .tray button { width: 22px; background: linear-gradient(#c4c4c4, #a8a8a8); border-left: 1px solid #555; }
.toggles button.on { background: linear-gradient(#d9f0f6, #9fcddb); }
.tray { margin-left: auto; }
.tray .space { width: 37px; }
.tray .scale { width: 59px; }
.tray .t { color: #111; }
.tray .drop { width: 15px; }
.tray .bulb { width: 31px; }
.gap { width: 22px; }
.nub { width: 5px; }
.desktop { height: 4px; background: linear-gradient(90deg, #4a3a38, #3a2e30 50%, #2b2a40 65%, #4a2f33 75%, #44372f); }

/* floating overlays */
.ime { position: fixed; right: 0; bottom: 62px; width: 239px; height: 37px; display: flex; align-items: center; justify-content: space-between; padding: 0 7px 0 3px; background: #fdfdfe; border: 1px solid #a9bdd0; border-radius: 3px; }
.ime svg { width: 20px; height: 20px; display: block; }
.ime .s { width: 40px; height: 38px; }
.ime i { width: 3px; height: 34px; border: 1px solid #f6cdbd; border-width: 0 1px; }
.ime button { color: #0f62bd; font-weight: 700; font-size: 18px; }
.mark { position: fixed; right: 95px; bottom: 35px; width: 350px; height: 170px; pointer-events: none; overflow: visible; }
.bai { font: bold 78px "Liberation Sans", sans-serif; }
.jy { font: bold 58px "Noto Sans CJK SC", sans-serif; }
.du { font: bold 46px "Liberation Sans", sans-serif; text-anchor: middle; fill: #3c424a; }
.url { font: 40px "Open Sans", sans-serif; fill: #fff; fill-opacity: .85; stroke: #999; stroke-opacity: .3; paint-order: stroke; stroke-width: 2; }
```

FILE: grid.js
```js
// Draws the drawing-area grid: one major line per five minor steps.
const model = document.querySelector('.model');
function lines(step, x0, y0, skip) {
  const w = model.clientWidth, h = model.clientHeight;
  let d = '';
  for (let k = -4; x0 + k * step < w; k++) {
    if (!skip || k % 5) d += `M${Math.floor(x0 + k * step) + 0.5} 0V${h}`;
  }
  for (let k = -4; y0 + k * step < h; k++) {
    if (!skip || k % 5) d += `M0 ${Math.floor(y0 + k * step) + 0.5}H${w}`;
  }
  return d;
}
function draw() {
  document.getElementById('grid-minor').setAttribute('d', lines(65.12 / 5, 51.5, 39.9, true));
  document.getElementById('grid-major').setAttribute('d', lines(65.12, 51.5, 39.9, false));
}
addEventListener('resize', draw);
draw();
```
